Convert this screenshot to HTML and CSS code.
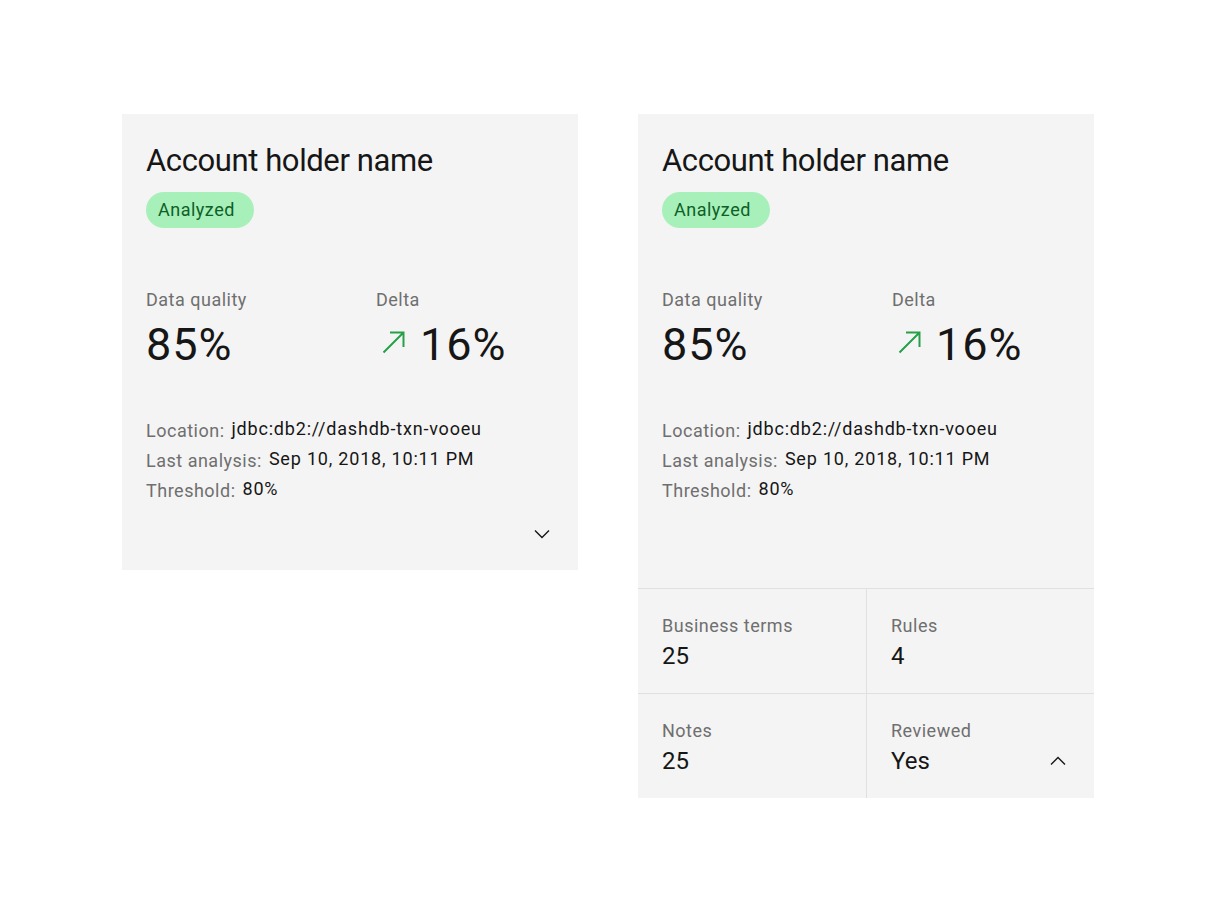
FILE: index.html
```html
<!DOCTYPE html>
<html lang="en">
<head>
<meta charset="utf-8">
<title>Data cards</title>
<link rel="stylesheet" href="styles.css">
</head>
<body>
<main class="canvas">
  <section class="card card-collapsed">
    <h2 class="title">Account holder name</h2>
    <span class="tag">Analyzed</span>
    <div class="metrics">
      <div class="metric">
        <div class="label">Data quality</div>
        <div class="big">85%</div>
      </div>
      <div class="metric">
        <div class="label">Delta</div>
        <div class="big delta">
          <svg class="arrow" width="24" height="24" viewBox="0 0 24 24" aria-hidden="true"><path d="M1.5 22.5 L21.5 2.5 M8 2.5 H21.5 V17" fill="none" stroke="#24a148" stroke-width="2"/></svg>
          <span>16%</span>
        </div>
      </div>
    </div>
    <div class="meta">
      <div class="meta-row"><span class="meta-label">Location:</span><span class="meta-value">jdbc:db2://dashdb-txn-vooeu</span></div>
      <div class="meta-row"><span class="meta-label">Last analysis:</span><span class="meta-value">Sep 10, 2018, 10:11 PM</span></div>
      <div class="meta-row"><span class="meta-label">Threshold:</span><span class="meta-value">80%</span></div>
    </div>
    <div class="card-foot">
      <button class="icon-btn" aria-label="Expand">
        <svg width="16" height="16" viewBox="0 0 16 16" aria-hidden="true"><polyline points="1,4.5 8,11.5 15,4.5" fill="none" stroke="#161616" stroke-width="1.4"/></svg>
      </button>
    </div>
  </section>

  <section class="card card-expanded">
    <div class="card-top">
      <h2 class="title">Account holder name</h2>
      <span class="tag">Analyzed</span>
      <div class="metrics">
        <div class="metric">
          <div class="label">Data quality</div>
          <div class="big">85%</div>
        </div>
        <div class="metric">
          <div class="label">Delta</div>
          <div class="big delta">
            <svg class="arrow" width="24" height="24" viewBox="0 0 24 24" aria-hidden="true"><path d="M1.5 22.5 L21.5 2.5 M8 2.5 H21.5 V17" fill="none" stroke="#24a148" stroke-width="2"/></svg>
            <span>16%</span>
          </div>
        </div>
      </div>
      <div class="meta">
        <div class="meta-row"><span class="meta-label">Location:</span><span class="meta-value">jdbc:db2://dashdb-txn-vooeu</span></div>
        <div class="meta-row"><span class="meta-label">Last analysis:</span><span class="meta-value">Sep 10, 2018, 10:11 PM</span></div>
        <div class="meta-row"><span class="meta-label">Threshold:</span><span class="meta-value">80%</span></div>
      </div>
    </div>
    <div class="stats">
      <div class="cell cell-left cell-top">
        <div class="label">Business terms</div>
        <div class="cell-value">25</div>
      </div>
      <div class="cell cell-top">
        <div class="label">Rules</div>
        <div class="cell-value">4</div>
      </div>
      <div class="cell cell-left">
        <div class="label">Notes</div>
        <div class="cell-value">25</div>
      </div>
      <div class="cell">
        <div class="label">Reviewed</div>
        <div class="cell-value cell-value-row">
          <span>Yes</span>
          <button class="icon-btn" aria-label="Collapse">
            <svg width="16" height="16" viewBox="0 0 16 16" aria-hidden="true"><polyline points="1,11.5 8,4.5 15,11.5" fill="none" stroke="#161616" stroke-width="1.4"/></svg>
          </button>
        </div>
      </div>
    </div>
  </section>
</main>
</body>
</html>
```

FILE: styles.css
```css
* { box-sizing: border-box; }

html, body {
  margin: 0;
  padding: 0;
  background: #ffffff;
}

body {
  font-family: Roboto, "Liberation Sans", Arial, sans-serif;
  color: #161616;
}

.canvas {
  display: flex;
  align-items: flex-start;
  gap: 60px;
  padding: 114px 0 0 122px;
}

.card {
  width: 456px;
  background: #f4f4f4;
  display: flex;
  flex-direction: column;
}

.card-collapsed {
  height: 456px;
  padding: 26px 24px 24px 24px;
}

.card-top {
  height: 475px;
  padding: 26px 24px 0 24px;
  border-bottom: 1px solid #e0e0e0;
  display: flex;
  flex-direction: column;
}

.title {
  margin: 1px 0 0 0;
  font-size: 31px;
  line-height: 40px;
  font-weight: 400;
  letter-spacing: -0.4px;
  color: #161616;
}

.tag {
  align-self: flex-start;
  margin-top: 11px;
  height: 36px;
  line-height: 36px;
  padding: 0 19px 0 12px;
  border-radius: 18px;
  background: #a7f0ba;
  color: #0e6027;
  font-size: 18px;
  letter-spacing: 0.5px;
}

.metrics {
  display: flex;
  margin-top: 60px;
}

.metric {
  flex: none;
  width: 230px;
}

.label {
  font-size: 18px;
  line-height: 24px;
  letter-spacing: 0.5px;
  color: #6f6f6f;
}

.big {
  margin-top: 7px;
  font-size: 45px;
  line-height: 52px;
  letter-spacing: 1px;
  color: #161616;
}

.delta {
  display: flex;
  align-items: center;
}

.arrow {
  margin-left: 6px;
  margin-right: 14px;
  margin-top: -6px;
  flex: none;
}

.meta {
  margin-top: 45px;
}

.meta-row {
  display: flex;
  align-items: flex-start;
  height: 30px;
  font-size: 18px;
}

.meta-label {
  line-height: 30px;
  color: #6f6f6f;
  letter-spacing: 0.5px;
  margin-right: 7px;
}

.meta-value {
  line-height: 26px;
  color: #161616;
  letter-spacing: 0.8px;
}

.card-foot {
  margin-top: auto;
  display: flex;
  justify-content: flex-end;
}

.icon-btn {
  width: 24px;
  height: 24px;
  padding: 0;
  border: 0;
  background: transparent;
  display: flex;
  align-items: center;
  justify-content: center;
}

.icon-btn svg {
  display: block;
}

.stats {
  display: grid;
  grid-template-columns: 229px 1fr;
}

.cell {
  height: 104px;
  padding: 25px 24px 0 24px;
}

.cell-left {
  border-right: 1px solid #e0e0e0;
}

.cell-top {
  height: 105px;
  border-bottom: 1px solid #e0e0e0;
}

.cell-value {
  margin-top: 2px;
  font-size: 24px;
  line-height: 32px;
  color: #161616;
}

.cell-value-row {
  display: flex;
  justify-content: space-between;
  align-items: center;
}
```
